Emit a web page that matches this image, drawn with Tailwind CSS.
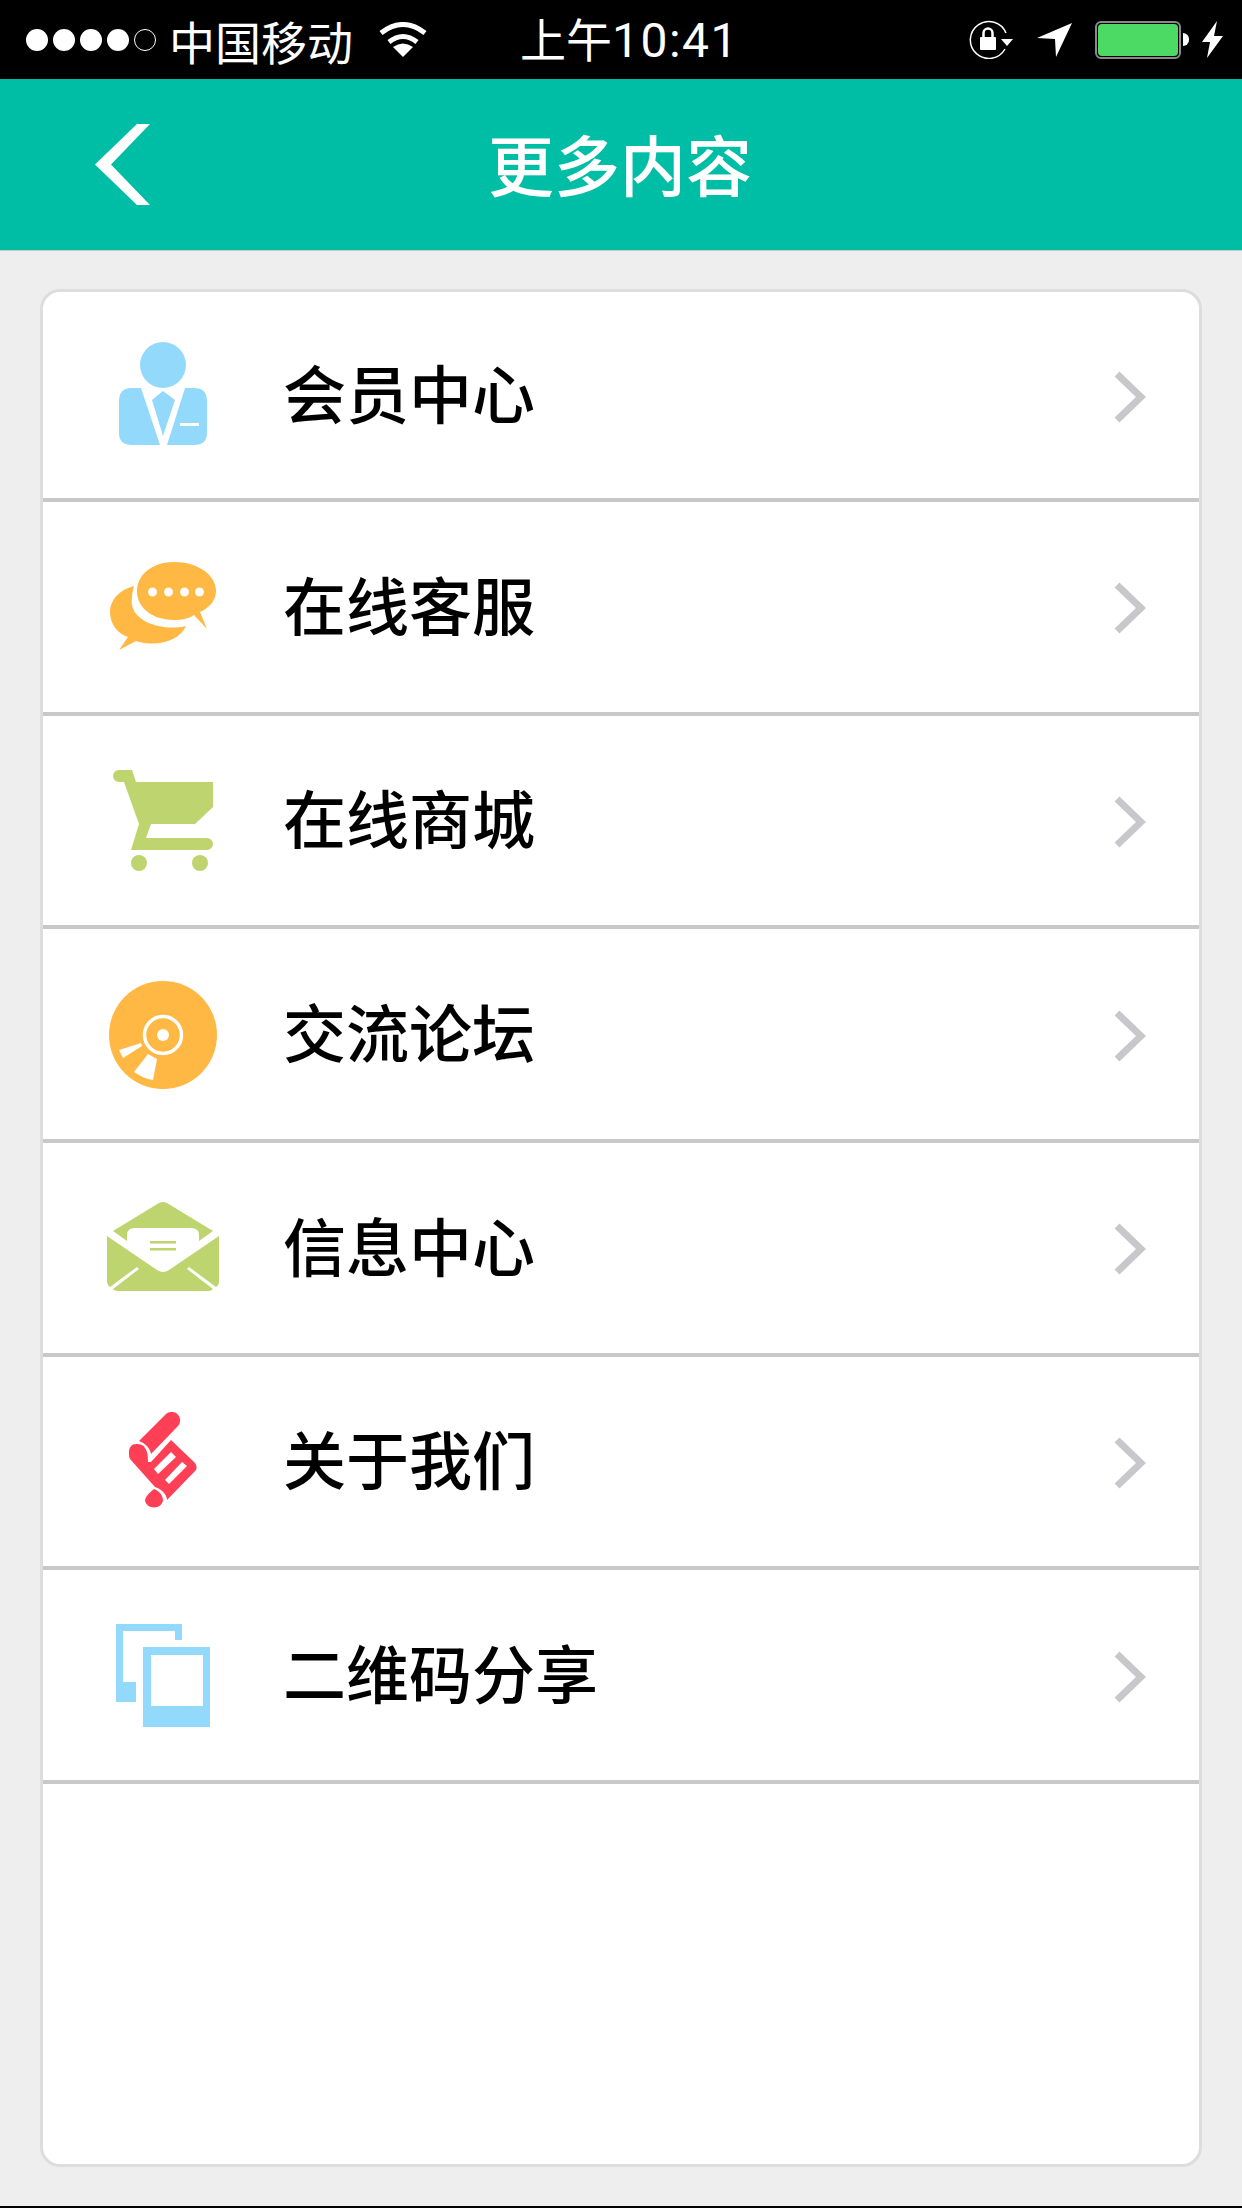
<!DOCTYPE html>
<html lang="zh-CN">
<head>
  <meta charset="UTF-8" />
  <meta name="viewport" content="width=device-width, initial-scale=1" />
  <title>更多内容</title>
  <script src="https://cdn.jsdelivr.net/npm/@tailwindcss/browser@4"></script>
</head>
<body class="bg-[#eeeeee] font-['Noto_Sans_CJK_SC',sans-serif]">
  <div class="flex flex-col h-[2208px] w-[1242px] overflow-hidden border-b-2 border-black">

    <!-- status bar -->
    <div class="h-[79px] shrink-0 bg-black text-white flex items-center">
      <div class="flex items-center gap-[5px] ml-[26px] shrink-0">
        <span class="w-[22px] h-[22px] rounded-full bg-white"></span>
        <span class="w-[22px] h-[22px] rounded-full bg-white"></span>
        <span class="w-[22px] h-[22px] rounded-full bg-white"></span>
        <span class="w-[22px] h-[22px] rounded-full bg-white"></span>
        <span class="w-[22px] h-[22px] rounded-full border border-white"></span>
      </div>
      <span class="ml-[13px] text-[46px] leading-none font-normal">中国移动</span>
      <svg class="ml-[26px]" width="48" height="35" viewBox="0 0 48 35" fill="none" stroke="#fff" stroke-width="5">
        <path d="M2 11 Q24 -6 46 11" />
        <path d="M10 20 Q24 9 38 20" />
        <path d="M24 35 L14 25 Q24 18 34 25 Z" fill="#fff" stroke="none" />
      </svg>
      <span class="ml-[93px] text-[46px] leading-none font-normal">上午<span class="font-['Roboto',sans-serif] font-normal text-[48px] tracking-[1.5px]">10:41</span></span>
      <div class="ml-auto mr-[19px] flex items-center">
        <svg width="44" height="39" viewBox="0 0 44 39" fill="none" stroke="#fff" stroke-width="1.5">
          <path d="M37 13 A18.5 18.5 0 1 0 36 29" />
          <path d="M32 19 H44 L38 26 Z" fill="#fff" stroke="none" />
          <rect x="11" y="17" width="16" height="13" rx="1" fill="#fff" stroke="none" />
          <path d="M14.5 17 V13 A4.5 4.5 0 0 1 23.5 13 V17" stroke-width="2.5" />
        </svg>
        <svg class="ml-[24px]" width="35" height="34" viewBox="0 0 35 34" fill="#fff">
          <path d="M35 0 L19 34 L18 16 L0 15 Z" />
        </svg>
        <div class="ml-[23px] w-[86px] h-[38px] rounded-[6px] border-[2px] border-[#8a8a8a] p-[1px]">
          <div class="w-full h-full rounded-[4px] bg-[#4cd964]"></div>
        </div>
        <div class="ml-[2px] w-[6px] h-[13px] rounded-r-full bg-white"></div>
        <svg class="ml-[13px]" width="21" height="37" viewBox="0 0 21 37" fill="#fff">
          <path d="M15 0 L0 21 H8 L5 37 L21 15 H12 Z" />
        </svg>
      </div>
    </div>

    <!-- nav bar -->
    <div class="h-[172px] shrink-0 bg-[#00bda6] border-b border-[#c8c8c8] relative flex items-center justify-center">
      <svg class="absolute left-[95px] top-[45px]" width="55" height="81" viewBox="0 0 55 81" fill="#fff">
        <path d="M42 0 H55 L16 40.5 L55 81 H42 L0 40.5 Z" />
      </svg>
      <h1 class="text-[66px] leading-none font-medium text-white -mt-[6px] -ml-[2px]">更多内容</h1>
    </div>

    <!-- menu card -->
    <div class="flex-1 min-h-0 px-[40px] pt-[38px] pb-[39px]">
      <div class="h-full bg-white rounded-[20px] border-[3px] border-[#dddddd] overflow-hidden">

        <a class="flex items-center h-[210px] border-b-4 border-[#c8c8c8]">
          <div class="w-[240px] shrink-0 flex justify-center -mt-[3px]">
            <svg width="88" height="103" viewBox="0 0 88 103" fill="#93d9fc">
              <circle cx="44" cy="23" r="23" />
              <path d="M22 46 H13 Q0 46 0 59 V91 Q0 103 13 103 H41 Z" />
              <path d="M66 46 H75 Q88 46 88 59 V91 Q88 103 75 103 H48 Z M61 81 H80 V84 H61 Z" fill-rule="evenodd" />
              <path d="M44 49 L56 58 L44 94 L33 58 Z" />
            </svg>
          </div>
          <span class="flex-1 text-[63px] font-medium leading-none text-black -mt-[9px]">会员中心</span>
          <svg class="mr-[53px] mt-[3px]" width="32" height="52" viewBox="0 0 32 52" fill="none" stroke="#c7c7cc" stroke-width="7"><path d="M3 3 L27 26 L3 49" /></svg>
        </a>

        <a class="flex items-center h-[213.67px] border-b-4 border-[#c8c8c8]">
          <div class="w-[240px] shrink-0 flex justify-center mt-[1px]">
            <svg width="106" height="90" viewBox="0 0 106 90" fill="#ffb844">
              <path d="M24 24 C9 28 0 38 0 50 C0 62 8 72 18 75 L9 88 L26 79 C48 86 70 78 76 64 C50 70 18 58 22 36 C22 32 23 28 24 24 Z" />
              <path d="M64 0 C42 0 27 13 27 29 C27 47 44 58 64 58 C72 58 78 57 84 53 L97 67 L90 50 C101 45 106 37 106 29 C106 13 88 0 64 0 Z M38 30 a4.5 4.5 0 1 0 9 0 a4.5 4.5 0 1 0 -9 0 Z M54 30 a4.5 4.5 0 1 0 9 0 a4.5 4.5 0 1 0 -9 0 Z M70 30 a4.5 4.5 0 1 0 9 0 a4.5 4.5 0 1 0 -9 0 Z M85 30 a4.5 4.5 0 1 0 9 0 a4.5 4.5 0 1 0 -9 0 Z" fill-rule="evenodd" />
            </svg>
          </div>
          <span class="flex-1 text-[63px] font-medium leading-none text-black -mt-[9px]">在线客服</span>
          <svg class="mr-[53px] mt-[3px]" width="32" height="52" viewBox="0 0 32 52" fill="none" stroke="#c7c7cc" stroke-width="7"><path d="M3 3 L27 26 L3 49" /></svg>
        </a>

        <a class="flex items-center h-[213.67px] border-b-4 border-[#c8c8c8]">
          <div class="w-[240px] shrink-0 flex justify-center">
            <svg width="100" height="101" viewBox="0 0 100 101" fill="#bed46f">
              <path d="M6 0 H19 L23 12 H100 V37 L82 54 H38 L33 68 H94 A6 6 0 0 1 94 80 H18 L26 54 L11 12 H6 A6 6 0 0 1 6 0 Z" />
              <circle cx="26" cy="93" r="8" />
              <circle cx="87" cy="93" r="8" />
            </svg>
          </div>
          <span class="flex-1 text-[63px] font-medium leading-none text-black -mt-[9px]">在线商城</span>
          <svg class="mr-[53px] mt-[3px]" width="32" height="52" viewBox="0 0 32 52" fill="none" stroke="#c7c7cc" stroke-width="7"><path d="M3 3 L27 26 L3 49" /></svg>
        </a>

        <a class="flex items-center h-[213.67px] border-b-4 border-[#c8c8c8]">
          <div class="w-[240px] shrink-0 flex justify-center mt-[1px]">
            <svg width="108" height="108" viewBox="0 0 108 108">
              <circle cx="54" cy="54" r="54" fill="#ffb844" />
              <circle cx="54" cy="54" r="18.5" fill="none" stroke="#fff" stroke-width="3.5" />
              <circle cx="54" cy="54" r="6" fill="#fff" />
              <path d="M10 69 L32 62 L33 65 L14 77 Z" fill="#fff" />
              <path d="M39 73 L48 78 L44 99 C37 98 31 95 25 91 Z" fill="#fff" />
            </svg>
          </div>
          <span class="flex-1 text-[63px] font-medium leading-none text-black -mt-[9px]">交流论坛</span>
          <svg class="mr-[53px] mt-[3px]" width="32" height="52" viewBox="0 0 32 52" fill="none" stroke="#c7c7cc" stroke-width="7"><path d="M3 3 L27 26 L3 49" /></svg>
        </a>

        <a class="flex items-center h-[213.67px] border-b-4 border-[#c8c8c8]">
          <div class="w-[240px] shrink-0 flex justify-center -mt-[3px]">
            <svg width="112" height="90" viewBox="0 0 112 90" fill="#bed46f">
              <path d="M6 30 L52 2 Q56 0 60 2 L106 30 L92 40 V34 Q92 27 84 27 H28 Q20 27 20 34 V40 Z" />
              <path d="M0 35 L50 69 Q56 73 62 69 L112 35 V80 Q112 84 109 86 L82 66 L80 68 L106 88 Q104 90 102 90 H10 Q8 90 6 88 L32 68 L30 66 L3 86 Q0 84 0 80 Z" />
              <path d="M43 40 H69 V42.5 H43 Z M43 47 H69 V49.5 H43 Z" />
            </svg>
          </div>
          <span class="flex-1 text-[63px] font-medium leading-none text-black -mt-[9px]">信息中心</span>
          <svg class="mr-[53px] mt-[3px]" width="32" height="52" viewBox="0 0 32 52" fill="none" stroke="#c7c7cc" stroke-width="7"><path d="M3 3 L27 26 L3 49" /></svg>
        </a>

        <a class="flex items-center h-[213.67px] border-b-4 border-[#c8c8c8]">
          <div class="w-[240px] shrink-0 flex justify-center mt-[1px]">
            <svg width="68" height="100" viewBox="0 0 68 100" fill="#ff3f55">
              <path d="M10 29 L37 2 A8.5 8.5 0 0 1 49 14 L22 42 C21 36 16 31 10 29 Z" />
              <path d="M0 40 C0 35 3 32 7 32 C11 32 15 33 16 36 C19 40 19 46 19 50 L22 50 L42 28 L65 50 C68 53 68 56 67 58 L38 88 C38 83 33 77 26 75 L1 47 C0 45 0 43 0 40 Z M25 57 L29 62 L47 45 L42 40 Z M36 68 L40 72 L58 54 L53 50 Z" fill-rule="evenodd" />
              <path d="M25 77 C30 79 34 83 34 89 A9.5 9.5 0 0 1 16 89 C16 85 20 81 25 77 Z" />
            </svg>
          </div>
          <span class="flex-1 text-[63px] font-medium leading-none text-black -mt-[9px]">关于我们</span>
          <svg class="mr-[53px] mt-[3px]" width="32" height="52" viewBox="0 0 32 52" fill="none" stroke="#c7c7cc" stroke-width="7"><path d="M3 3 L27 26 L3 49" /></svg>
        </a>

        <a class="flex items-center h-[213.67px] border-b-4 border-[#c8c8c8]">
          <div class="w-[240px] shrink-0 flex justify-center">
            <svg width="94" height="103" viewBox="0 0 94 103" fill="#93d9fc">
              <path d="M0 0 H66 V16 H59 V7 H7 V58 H20 V78 H0 Z" />
              <path d="M27 23 H94 V103 H27 Z M35 31 V82 H87 V31 Z" fill-rule="evenodd" />
            </svg>
          </div>
          <span class="flex-1 text-[63px] font-medium leading-none text-black -mt-[9px]">二维码分享</span>
          <svg class="mr-[53px] mt-[3px]" width="32" height="52" viewBox="0 0 32 52" fill="none" stroke="#c7c7cc" stroke-width="7"><path d="M3 3 L27 26 L3 49" /></svg>
        </a>

      </div>
    </div>
  </div>
</body>
</html>
